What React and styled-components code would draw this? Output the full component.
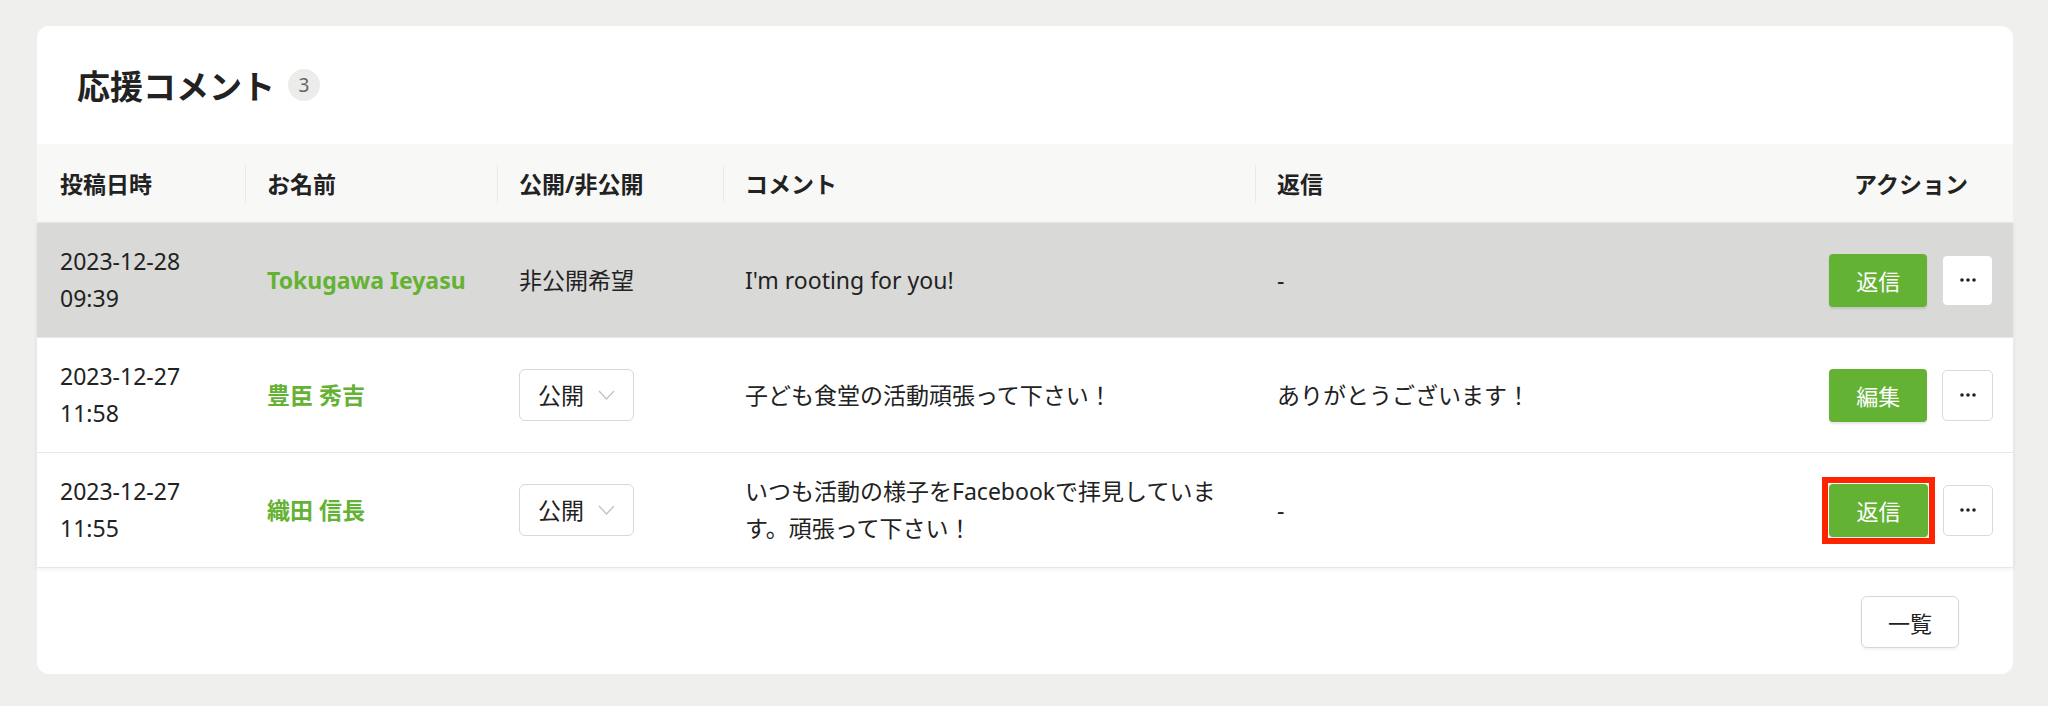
import styled, { createGlobalStyle } from 'styled-components';

const GlobalStyle = createGlobalStyle`
  body {
    margin: 0;
    background: #efefed;
    font-family: "Noto Sans", "Noto Sans CJK JP", sans-serif;
    color: #222;
  }
`;

const COLUMNS = '208px 252px 226px 532px 531px 227px';
const GREEN = '#64b234';

const Page = styled.div`
  padding: 26px 35px 32px 37px;
`;

const Card = styled.section`
  background: #fff;
  border-radius: 12px;
`;

const TitleBar = styled.div`
  height: 118px;
  display: flex;
  align-items: center;
  gap: 13px;
  padding: 0 40px;
`;

const Title = styled.h2`
  margin: 0;
  font-size: 33px;
  font-weight: 700;
  color: #222;
`;

const CountBadge = styled.span`
  width: 32px;
  height: 32px;
  border-radius: 50%;
  background: #ececeb;
  color: #666;
  font-size: 19px;
  display: flex;
  align-items: center;
  justify-content: center;
`;

const HeaderRow = styled.div`
  display: grid;
  grid-template-columns: ${COLUMNS};
  height: 79px;
  background: #f8f8f7;
  border-bottom: 1px solid #ebebea;
  box-sizing: border-box;
`;

const HeadCell = styled.div`
  position: relative;
  display: flex;
  align-items: center;
  justify-content: ${(p) => (p.$center ? 'center' : 'flex-start')};
  padding: ${(p) => (p.$center ? '0 20px 0 43px' : '0 22px')};
  font-size: 23px;
  font-weight: 700;

  &:first-child {
    padding-left: 23px;
  }

  & + &::before {
    content: '';
    position: absolute;
    left: 0;
    top: 21px;
    height: 38px;
    border-left: 1px solid #e9e9e8;
  }
`;

const Body = styled.div`
  box-shadow: 0 1px 5px rgba(0, 0, 0, 0.07);
`;

const Row = styled.div`
  display: grid;
  grid-template-columns: ${COLUMNS};
  height: 115px;
  box-sizing: border-box;
  border-bottom: 1px solid #e7e7e6;
  background: ${(p) => (p.$highlight ? '#d9d9d8' : '#fff')};
`;

const Cell = styled.div`
  display: flex;
  align-items: center;
  padding: 0 22px;
  font-size: 23px;
  line-height: 37px;

  &:first-child {
    padding-left: 23px;
  }
`;

const ActionCell = styled(Cell)`
  justify-content: center;
  gap: 15px;
  padding: 0 20px 0 43px;
`;

const Name = styled.span`
  color: ${GREEN};
  font-weight: 700;
`;

const Select = styled.div`
  width: 115px;
  height: 52px;
  box-sizing: border-box;
  border: 1px solid #d8d8d8;
  border-radius: 6px;
  background: #fff;
  display: flex;
  align-items: center;
  justify-content: space-between;
  padding: 0 18px;
`;

const Marker = styled.span`
  display: flex;
  margin: -7px;
  padding: 1px;
  border: 6px solid #ff2400;
`;

const PrimaryButton = styled.button`
  width: 99px;
  height: 53px;
  border: none;
  border-radius: 4px;
  background: ${GREEN};
  color: #fff;
  font-family: inherit;
  font-size: 22px;
  box-shadow: 0 2px 2px rgba(0, 0, 0, 0.1);
`;

const MoreButton = styled.button`
  width: 51px;
  height: 51px;
  border: 1px solid #dadada;
  border-radius: 5px;
  background: #fff;
  display: flex;
  align-items: center;
  justify-content: center;
  padding: 0;
`;

const Footer = styled.div`
  display: flex;
  justify-content: flex-end;
  padding: 28px 54px 26px;
`;

const ListButton = styled.button`
  width: 98px;
  height: 52px;
  border: 1px solid #d6d6d6;
  border-radius: 6px;
  background: #fff;
  font-family: inherit;
  font-size: 22px;
  color: #222;
  box-shadow: 0 2px 3px rgba(0, 0, 0, 0.05);
`;

const Chevron = () => (
  <svg width="17" height="10" viewBox="0 0 17 10">
    <polyline points="1,1 8.5,9 16,1" fill="none" stroke="#c2c2c2" strokeWidth="1.3" />
  </svg>
);

const Dots = () => (
  <svg width="16" height="4" viewBox="0 0 16 4">
    <circle cx="2" cy="2" r="1.8" fill="#222" />
    <circle cx="8" cy="2" r="1.8" fill="#222" />
    <circle cx="14" cy="2" r="1.8" fill="#222" />
  </svg>
);

const comments = [
  {
    date: '2023-12-28',
    time: '09:39',
    name: 'Tokugawa Ieyasu',
    visibility: '非公開希望',
    comment: "I'm rooting for you!",
    reply: '-',
    action: '返信',
    highlight: true,
  },
  {
    date: '2023-12-27',
    time: '11:58',
    name: '豊臣 秀吉',
    visibility: 'select',
    comment: '子ども食堂の活動頑張って下さい！',
    reply: 'ありがとうございます！',
    action: '編集',
  },
  {
    date: '2023-12-27',
    time: '11:55',
    name: '織田 信長',
    visibility: 'select',
    comment: 'いつも活動の様子をFacebookで拝見しています。頑張って下さい！',
    reply: '-',
    action: '返信',
    marked: true,
  },
];

export default function App() {
  return (
    <>
      <GlobalStyle />
      <Page>
        <Card>
          <TitleBar>
            <Title>応援コメント</Title>
            <CountBadge>3</CountBadge>
          </TitleBar>
          <HeaderRow>
            <HeadCell>投稿日時</HeadCell>
            <HeadCell>お名前</HeadCell>
            <HeadCell>公開/非公開</HeadCell>
            <HeadCell>コメント</HeadCell>
            <HeadCell>返信</HeadCell>
            <HeadCell $center>アクション</HeadCell>
          </HeaderRow>
          <Body>
            {comments.map((c, i) => {
              const button = <PrimaryButton>{c.action}</PrimaryButton>;
              return (
                // eslint-disable-next-line react/no-array-index-key
                <Row key={i} $highlight={c.highlight}>
                  <Cell>
                    <div>
                      {c.date}
                      <br />
                      {c.time}
                    </div>
                  </Cell>
                  <Cell>
                    <Name>{c.name}</Name>
                  </Cell>
                  <Cell>
                    {c.visibility === 'select' ? (
                      <Select>
                        公開
                        <Chevron />
                      </Select>
                    ) : (
                      c.visibility
                    )}
                  </Cell>
                  <Cell>{c.comment}</Cell>
                  <Cell>{c.reply}</Cell>
                  <ActionCell>
                    {c.marked ? <Marker>{button}</Marker> : button}
                    <MoreButton>
                      <Dots />
                    </MoreButton>
                  </ActionCell>
                </Row>
              );
            })}
          </Body>
          <Footer>
            <ListButton>一覧</ListButton>
          </Footer>
        </Card>
      </Page>
    </>
  );
}
